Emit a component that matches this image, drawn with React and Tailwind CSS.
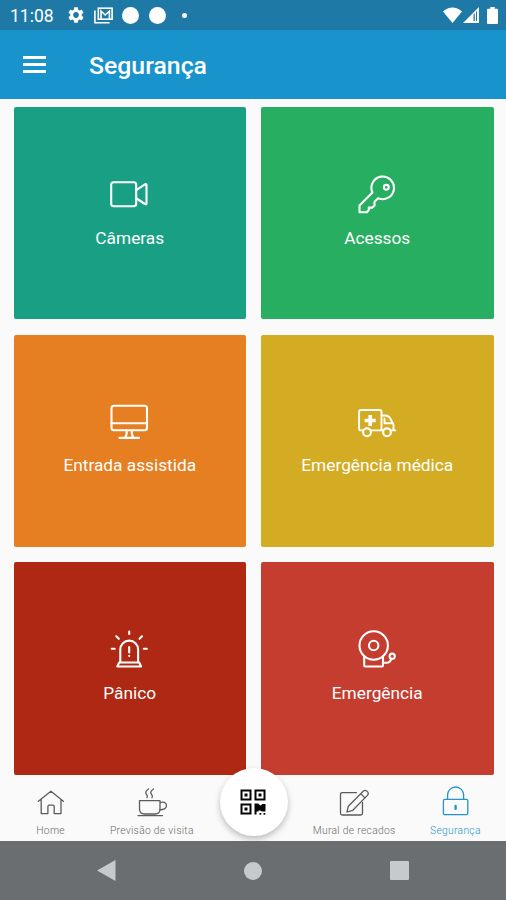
const tiles = [
  { label: 'Câmeras', color: 'bg-[#189f84]', Icon: CameraIcon },
  { label: 'Acessos', color: 'bg-[#28ae60]', Icon: KeyIcon },
  { label: 'Entrada assistida', color: 'bg-[#e67e22]', Icon: MonitorIcon },
  { label: 'Emergência médica', color: 'bg-[#d4ac24]', Icon: AmbulanceIcon },
  { label: 'Pânico', color: 'bg-[#ae2813]', Icon: SirenIcon },
  { label: 'Emergência', color: 'bg-[#c43d2f]', Icon: BellIcon },
];

function TileSvg({ children }) {
  return (
    <svg className="w-10 h-10 -ml-px" viewBox="0 0 40 40" fill="none" stroke="currentColor" strokeWidth="2.1" strokeLinecap="round" strokeLinejoin="round">
      {children}
    </svg>
  );
}

function CameraIcon() {
  return (
    <TileSvg>
      <rect x="2.2" y="7.3" width="25" height="24" rx="2.5" />
      <path d="M27.5 15l8.5-5.7q1.5-.7 1.5 1V28.3q0 1.5-1.5.7L27.5 23.5" />
    </TileSvg>
  );
}

function KeyIcon() {
  return (
    <TileSvg>
      <path d="M15.4 17.5A11.3 11.3 0 1 1 21.2 23.2L17.5 26.8V30.5L15.3 32.6H11.8V35L9.8 37.2H2.5V30.4Z" />
      <circle cx="29.3" cy="12.3" r="2.4" />
    </TileSvg>
  );
}

function MonitorIcon() {
  return (
    <TileSvg>
      <rect x="2.5" y="2.8" width="35.5" height="24.5" rx="2.5" />
      <path d="M2.5 20.3H38M17.8 27.5q0 5-1.6 7.2M22.7 27.5q0 5 1.6 7.2M10.5 34.9H30" />
    </TileSvg>
  );
}

function AmbulanceIcon() {
  return (
    <TileSvg>
      <path d="M5.8 27.4H4q-1.9 0-1.9-2V8.8Q2.1 7 4 7H22.8Q24.5 7 24.5 9V27.4M14.3 27.4H25.7M34.2 27.4H38.3M24.5 12.5H28.5Q33 13 34.5 18L36.5 21.5V27.4M27.5 15.5V20.3H35.5" strokeWidth="1.9" />
      <circle cx="10" cy="29.3" r="3.9" />
      <circle cx="30" cy="29.3" r="3.9" />
      <path d="M13.2 12V23M7.7 17.5H18.7" strokeWidth="3.6" strokeLinecap="butt" />
    </TileSvg>
  );
}

function SirenIcon() {
  return (
    <TileSvg>
      <path d="M11.3 31.5V19.5a8.9 8.9 0 0 1 17.8 0V31.5M10.2 32.5H30.2L32 36.5H8.3Z" />
      <path d="M20.2 17V22.5M20.2 25.7V26M20.2 1.5V4M7.3 6.3L9.8 8.8M33 6.3L30.5 8.8M2.7 18.7H5.7M34.8 18.7H37.8" />
    </TileSvg>
  );
}

function BellIcon() {
  return (
    <TileSvg>
      <circle cx="16.7" cy="15.5" r="14.2" />
      <circle cx="16.7" cy="15.5" r="4.7" />
      <path d="M7.2 26.5V35.5q0 1 1 1H25q1 0 1-1V26.5M26 32.8H29.5Q33 32.8 34.3 29" />
      <circle cx="35.2" cy="26.2" r="2.6" />
    </TileSvg>
  );
}

function NavSvg({ children }) {
  return (
    <svg className="w-8 h-8" viewBox="0 0 32 32" fill="none" stroke="currentColor" strokeWidth="1.3" strokeLinecap="round" strokeLinejoin="round">
      {children}
    </svg>
  );
}

function HomeIcon() {
  return (
    <NavSvg>
      <path d="M3.4 16.3L15.9 6.2L28.4 16.3M6.2 14.5V28.6H12.9V21.5q0-1.3 1.3-1.3h3.7q1.3 0 1.3 1.3V28.6H26V14.5" />
    </NavSvg>
  );
}

function CupIcon() {
  return (
    <NavSvg>
      <path d="M3.5 15.6H24V24q0 5-5 5H8.5q-5 0-5-5ZM24 17.8c3-1.5 6.5-.5 6.5 2.700s-3.500 4.500-6.800 4.200M2 30.600H26.500M12.500 4c-4 3-3 4-1.500 6.200q.8 1.200 0 2.500M17.500 4c-4 3-3 4-1.500 6.200q.8 1.200 0 2.500" />
    </NavSvg>
  );
}

function NoteIcon() {
  return (
    <NavSvg>
      <path d="M18.5 7.6H4.3Q2.5 7.6 2.5 9.4V28.2Q2.5 30 4.3 30H22.7Q24.5 30 24.5 28.2V17.5" />
      <path d="M9 27L10.3 21.2L25.2 6.2q2-1.7 4 .2t.2 4L14.8 25.3ZM22.7 8.8L27 12.9" />
    </NavSvg>
  );
}

function LockIcon() {
  return (
    <NavSvg>
      <rect x="4.4" y="14.3" width="24.4" height="15.4" rx="1.5" />
      <path d="M8.6 14.2V10a8 8 0 0 1 16 0v4.2" />
      <path d="M16.6 21V23.8" strokeWidth="2.4" />
    </NavSvg>
  );
}

function QrIcon() {
  return (
    <svg className="w-[27px] h-[27px]" viewBox="0 0 27 27" fill="none" stroke="#050505" strokeWidth="2">
      <rect x="1.5" y="1.5" width="9" height="9" />
      <rect x="15.5" y="1.5" width="9" height="9" />
      <rect x="1.5" y="15.5" width="9" height="9" />
      <path d="M4.5 4.5h3v3h-3zM18.5 4.5h3v3h-3zM4.5 18.5h3v3h-3zM14.5 14.5h3.5l2.500 2l2-1.500H25.500v7.500h-3.500l-2-1h-1.500v1h-2v3h-2zM19.500 24h1.800v1.800h-1.800zM23.500 24h1.800v1.800h-1.800z" fill="#050505" stroke="none" />
    </svg>
  );
}

function StatusBar() {
  return (
    <div className="h-[30px] bg-[#1f79a6] flex items-center justify-between pl-[10px] pr-2 text-white">
      <div className="flex items-center">
        <span className="w-[58px] text-[17.5px] leading-[30px] pt-0.5">11:08</span>
        <svg className="w-4 h-4" viewBox="2 2 20 20" fill="currentColor">
          <path d="M19.140 12.940c.04-.3.060-.61.060-.94 0-.32-.02-.64-.07-.94l2.030-1.580c.18-.14.230-.41.120-.61l-1.920-3.320c-.12-.22-.37-.29-.59-.22l-2.390.96c-.5-.38-1.030-.7-1.620-.94l-.36-2.540c-.04-.24-.24-.41-.48-.41h-3.840c-.24 0-.43.170-.47.410l-.36 2.540c-.59.240-1.130.570-1.620.940l-2.390-.96c-.22-.08-.47 0-.59.220L2.740 8.870c-.12.210-.08.470.120.610l2.030 1.580c-.05.3-.09.630-.09.940s.02.640.070.940l-2.030 1.580c-.18.140-.23.410-.12.610l1.920 3.320c.12.220.37.290.59.220l2.390-.96c.5.380 1.030.7 1.620.940l.36 2.540c.05.240.24.410.48.410h3.840c.24 0 .44-.17.470-.41l.36-2.540c.59-.24 1.130-.56 1.620-.94l2.390.96c.22.080.47 0 .59-.22l1.920-3.320c.12-.22.070-.47-.12-.61l-2.010-1.580zM12 15.600c-1.980 0-3.600-1.620-3.600-3.600s1.620-3.600 3.600-3.600 3.600 1.620 3.600 3.600-1.620 3.600-3.600 3.600z" />
        </svg>
        <svg className="w-[19px] h-[17px] ml-[9.5px]" viewBox="0 0 19 17" fill="none" stroke="currentColor" strokeWidth="1.6">
          <path d="M.9 3.5V15.7H15.5M7 12V4L11.2 8L15.4 4V12" />
          <rect x="4.3" y="1.2" width="13.8" height="11" />
        </svg>
        <span className="w-[17px] h-[17px] ml-[9.5px] rounded-full bg-white" />
        <span className="w-[17px] h-[17px] ml-[10px] rounded-full bg-white" />
        <span className="w-[5px] h-[5px] ml-4 rounded-full bg-white" />
      </div>
      <div className="flex items-center">
        <svg className="w-[19px] h-[16px]" viewBox="0 0 19 16" fill="currentColor">
          <path d="M0 4.5Q9.5-3.5 19 4.5L9.5 16Z" />
        </svg>
        <svg className="w-[16px] h-[16px] ml-px" viewBox="0 0 16 16" fill="currentColor">
          <path d="M0 16L16 0V16ZM10.5 7.5V14H11.8V6.2ZM13 5V14H14V4Z" fillRule="evenodd" />
        </svg>
        <svg className="w-[11px] h-[17px] ml-2" viewBox="0 0 11 17" fill="currentColor">
          <path d="M3.3 0H7.7V1.7H10q1 0 1 1V16q0 1-1 1H1q-1 0-1-1V2.7q0-1 1-1H3.3Z" />
        </svg>
      </div>
    </div>
  );
}

function NavItem({ label, Icon, active }) {
  return (
    <button className={`flex-1 flex flex-col items-center pt-[10px] ${active ? 'text-[#2493ce]' : 'text-[#5b5b5b]'}`}>
      <Icon />
      <span className={`mt-[7px] text-[10.3px] leading-[14px] font-light tracking-[0.3px] whitespace-nowrap ${active ? 'text-[#2493ce]' : 'text-[#6b6b6b]'}`}>{label}</span>
    </button>
  );
}

export default function App() {
  return (
    <div className="w-[506px] h-[900px] flex flex-col overflow-hidden bg-[#fafafa] font-['Roboto',sans-serif]">
      <StatusBar />
      <header className="h-[68.5px] bg-[#1893cb] flex items-center px-[23px] text-white">
        <button className="flex flex-col gap-1">
          <span className="w-[23px] h-[3px] bg-white" />
          <span className="w-[23px] h-[3px] bg-white" />
          <span className="w-[23px] h-[3px] bg-white" />
        </button>
        <h1 className="ml-[43px] pt-[3px] text-[24.8px] font-medium leading-8">Segurança</h1>
      </header>

      <main className="grid grid-cols-2 gap-x-[15px] gap-y-[15.5px] pl-[13.5px] pr-[12.5px] pt-[8.5px]">
        {tiles.map(({ label, color, Icon }) => (
          <button key={label} className={`h-[212.2px] rounded-[2px] flex flex-col items-center pt-[68px] text-white ${color}`}>
            <Icon />
            <span className="mt-[10.5px] text-[17.3px] leading-6">{label}</span>
          </button>
        ))}
      </main>

      <nav className="mt-auto h-[66px] shrink-0 flex items-start">
        <NavItem label="Home" Icon={HomeIcon} />
        <NavItem label="Previsão de visita" Icon={CupIcon} />
        <div className="flex-1 flex justify-center">
          <button className="-mt-[7px] ml-px w-[68px] h-[68px] rounded-full bg-white flex items-center justify-center shadow-[0_3px_6px_rgba(0,0,0,0.25)]">
            <QrIcon />
          </button>
        </div>
        <NavItem label="Mural de recados" Icon={NoteIcon} />
        <NavItem label="Segurança" Icon={LockIcon} active />
      </nav>

      <div className="h-[59px] shrink-0 bg-[#6a6e71] px-[33.5px] grid grid-cols-3 items-center justify-items-center">
        <svg className="w-[19px] h-[21px]" viewBox="0 0 19 21" fill="#c6cacb">
          <path d="M0 10.5L18.5 0V21Z" />
        </svg>
        <span className="w-[18px] h-[18px] rounded-full bg-[#c6cacb]" />
        <span className="w-[19px] h-[19px] rounded-[1px] bg-[#c6cacb]" />
      </div>
    </div>
  );
}
